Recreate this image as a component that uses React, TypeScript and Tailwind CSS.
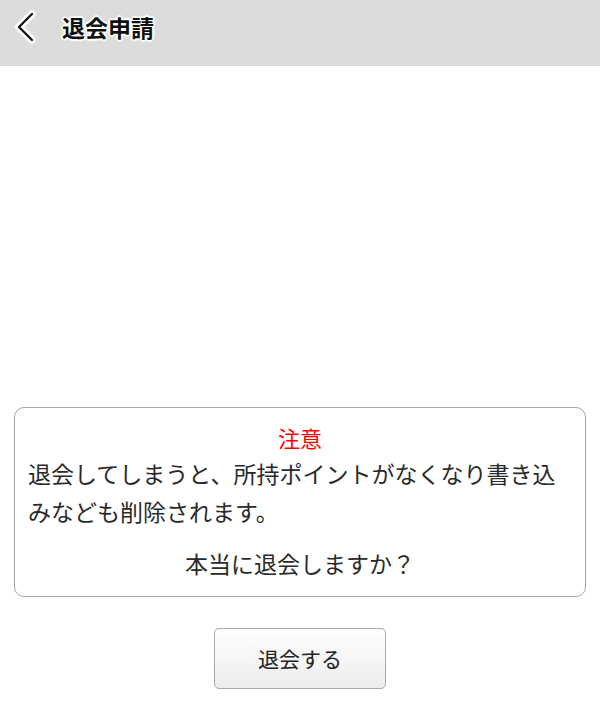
const halo =
  "[text-shadow:0_0_2px_#fff,0_0_2px_#fff,1px_1px_1px_#fff,-1px_-1px_1px_#fff,1px_-1px_1px_#fff,-1px_1px_1px_#fff,2px_0_1px_#fff,-2px_0_1px_#fff,0_2px_1px_#fff,0_-2px_1px_#fff]";

function BackChevron() {
  return (
    <svg width="26" height="36" viewBox="0 0 26 36" fill="none" aria-hidden>
      <path d="M19 5 L6 18 L19 31" stroke="#fff" strokeWidth="7.5" strokeLinecap="round" strokeLinejoin="round" />
      <path d="M19 5 L6 18 L19 31" stroke="#111" strokeWidth="2.3" strokeLinecap="round" strokeLinejoin="round" />
    </svg>
  );
}

export default function App() {
  return (
    <div className="min-h-[713px] bg-white font-['Noto_Sans_CJK_JP','Noto_Sans',sans-serif] text-[#2a2a2a]">
      <header className="flex h-[66px] items-center bg-[#dcdcdc] pb-[12px] pl-[13px]">
        <BackChevron />
        <h1 className={`ml-[23px] text-[23px] leading-none font-bold text-[#111] ${halo}`}>退会申請</h1>
      </header>

      <main className="pt-[341px]">
        <section className="mx-[14px] rounded-[10px] border border-[#a5a5a5] px-[13px] pt-[12px] pb-[16px]">
          <p className="text-center text-[22px] leading-[34px] text-[#f00]">注意</p>
          <p className="text-[23px] leading-[38px]">
            退会してしまうと、所持ポイントがなくなり書き込みなども削除されます。
          </p>
          <p className="mt-[16px] text-center text-[23px] leading-[34px]">本当に退会しますか？</p>
        </section>

        <div className="mt-[31px] flex justify-center">
          <button className="h-[61px] w-[172px] rounded-[5px] border border-[#aaa] bg-gradient-to-b from-white to-[#ececec] text-[21px] text-[#222]">
            退会する
          </button>
        </div>
      </main>
    </div>
  );
}
